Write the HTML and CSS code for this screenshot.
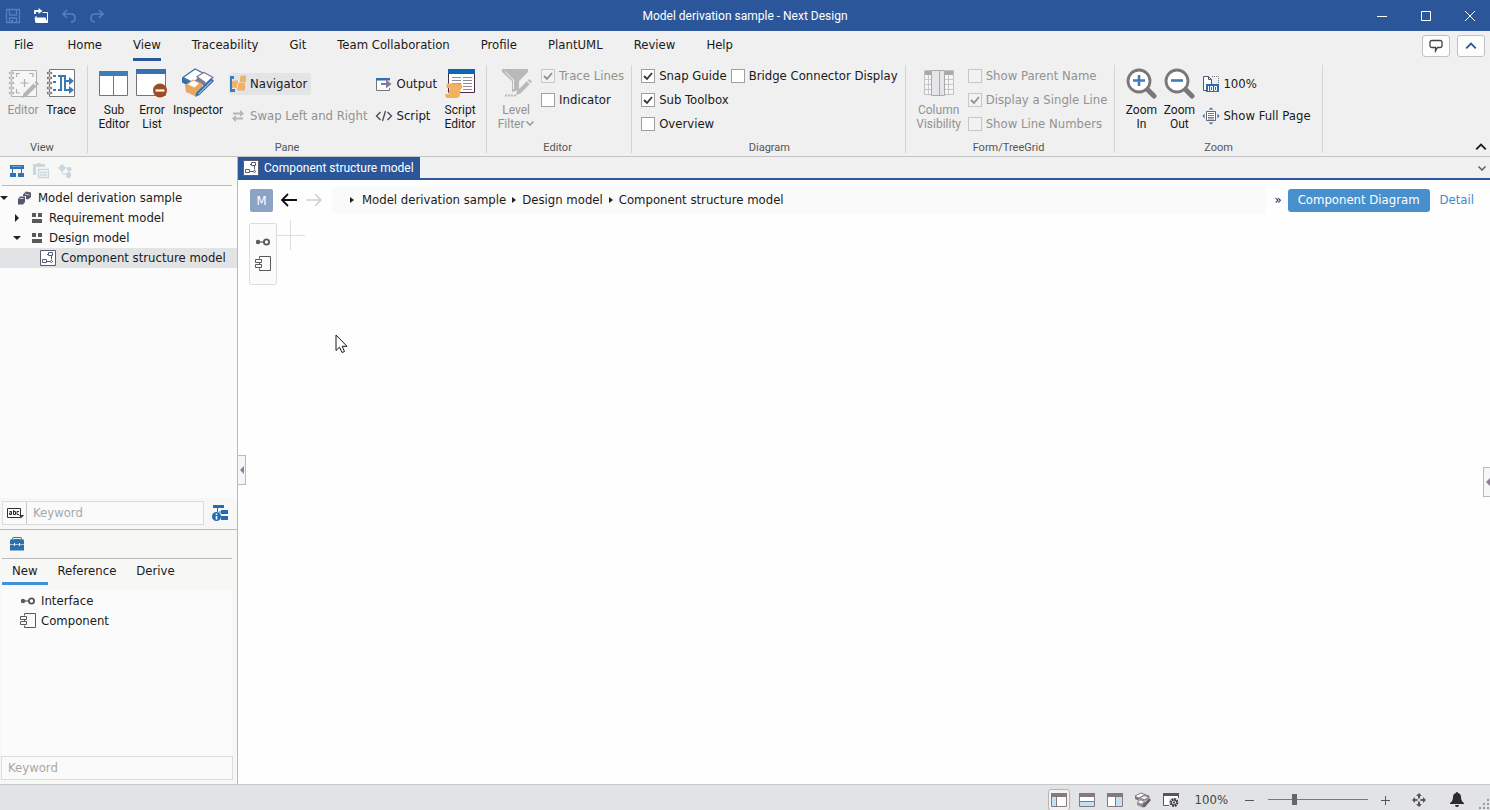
FILE: index.html
```html
<!DOCTYPE html>
<html lang="en">

<head>
  <meta charset="UTF-8">
  <meta name="viewport" content="width=device-width, initial-scale=1.0">
  <title>Model derivation sample - Next Design</title>
  <link rel="stylesheet" href="styles.css">
</head>

<body>
  <!-- shared icons -->
  <svg class="defs" width="0" height="0" aria-hidden="true">
    <symbol id="i-interface" viewBox="0 0 16 16">
      <circle cx="3" cy="8" r="2.2" fill="#595959"/>
      <path d="M4 8h5" stroke="#595959" stroke-width="1.2"/>
      <circle cx="11.5" cy="8" r="2.6" fill="none" stroke="#595959" stroke-width="1.8"/>
    </symbol>
    <symbol id="i-component" viewBox="0 0 16 16">
      <path d="M4.5 2.500V.5h11v14h-11v-2M4.500 7v1" fill="none" stroke="#595959"/>
      <path d="M.5 3.500h6v3h-6zM.5 8.500h6v3h-6z" fill="none" stroke="#595959"/>
    </symbol>
    <symbol id="i-structure" viewBox="0 0 16 16">
      <path d="M.5.5h15v15H.5z" fill="#fff" stroke="#5a5c72"/>
      <path d="M8.500 2.500h4v3h-4zM2.500 9.500h4v3h-4zM6.500 11.500h4M11.500 5.500v4M7 4.500h1.500" fill="none" stroke="#5a5c72"/>
      <circle cx="11.500" cy="11.500" r="1" fill="none" stroke="#5a5c72"/>
    </symbol>
    <symbol id="i-package" viewBox="0 0 12 12">
      <path d="M1 1h4v4H1zM7 1h4v4H7zM1 7h10v4H1z" fill="#595959"/>
    </symbol>
    <symbol id="i-chevron-down" viewBox="0 0 10 10">
      <path d="M1.500 3.500L5 7l3.500-3.500" fill="none" stroke="currentColor" stroke-width="1.400"/>
    </symbol>
    <symbol id="i-chevron-up" viewBox="0 0 10 10">
      <path d="M1 7l4-4 4 4" fill="none" stroke="currentColor" stroke-width="1.500"/>
    </symbol>
    <symbol id="i-pencil" viewBox="0 0 18 18">
      <path d="M1 17l1.500-4.500L12.500 2.500l3 3L5.500 15.500zM13.500 1.500l1-1q.8-.5 1.500.2l1.500 1.500q.6.700 0 1.300l-1 1z" fill="currentColor"/>
    </symbol>
  </svg>

  <header class="titlebar">
    <div class="quick">
      <button type="button" class="dim" aria-label="Save">
        <svg width="16" height="16" viewBox="0 0 16 16"><path d="M1.500 1.500h13v13h-13zM4.500 2v5h7V2M4.500 14v-4h7v4" fill="none" stroke="currentColor" stroke-width="1.300"/><path d="M6 12h2v2H6z" fill="currentColor"/></svg>
      </button>
      <button type="button" aria-label="Open">
        <svg width="16" height="16" viewBox="0 0 16 16"><path d="M3 8v6.500h11.500v-10H9.500" fill="none" stroke="currentColor"/><path d="M1.500 9.500h11l2 5H2.500z" fill="currentColor"/><path d="M2 6V3h4" fill="none" stroke="currentColor" stroke-width="1.800"/><path d="M5.500 0L9.500 3l-4 3z" fill="currentColor"/></svg>
      </button>
      <button type="button" class="dim" aria-label="Undo">
        <svg width="16" height="16" viewBox="0 0 16 16"><path d="M6 2L2 6l4 4M2.500 6H10q4 0 4 4t-4 4" fill="none" stroke="currentColor" stroke-width="1.600"/></svg>
      </button>
      <button type="button" class="dim" aria-label="Redo">
        <svg width="16" height="16" viewBox="0 0 16 16"><path d="M10 2l4 4-4 4M13.500 6H6q-4 0-4 4t4 4" fill="none" stroke="currentColor" stroke-width="1.600"/></svg>
      </button>
    </div>
    <h1 class="title">Model derivation sample - Next Design</h1>
    <div class="window-buttons">
      <button type="button" aria-label="Minimize"><svg width="12" height="12" viewBox="0 0 12 12"><path d="M1 6.500h10" stroke="#fff"/></svg></button>
      <button type="button" aria-label="Maximize"><svg width="12" height="12" viewBox="0 0 12 12"><path d="M1.500 1.500h9v9h-9z" fill="none" stroke="#fff"/></svg></button>
      <button type="button" aria-label="Close"><svg width="12" height="12" viewBox="0 0 12 12"><path d="M1 1l10 10M11 1L1 11" stroke="#fff"/></svg></button>
    </div>
  </header>

  <nav class="tabs">
    <a href="#" class="file">File</a>
    <a href="#">Home</a>
    <a href="#" class="active">View</a>
    <a href="#">Traceability</a>
    <a href="#">Git</a>
    <a href="#">Team Collaboration</a>
    <a href="#">Profile</a>
    <a href="#">PlantUML</a>
    <a href="#">Review</a>
    <a href="#">Help</a>
    <div class="tabs-right">
      <button type="button" aria-label="Feedback"><svg width="14" height="14" viewBox="0 0 14 14"><path d="M3 1.500h8q2 0 2 2v3q0 2-2 2H8.500L6.500 12V8.500H3q-2 0-2-2v-3q0-2 2-2z" fill="none" stroke="#444" stroke-width="1.300"/></svg></button>
      <button type="button" class="blue" aria-label="Collapse"><svg width="12" height="12"><use href="#i-chevron-up"/></svg></button>
    </div>
  </nav>

  <div class="ribbon">
    <section class="group">
      <div class="group-body">
        <button type="button" class="big" disabled>
          <svg width="32" height="32" viewBox="0 0 32 32" color="#b4b4b4"><path d="M4.500 3.500h25v26h-25z" fill="#f6f6f6" stroke="#b0b0b0"/><path d="M3 6h3M3 11h3M3 16h3M3 21h3M3 26h3" stroke="#b0b0b0" stroke-width="2.500" stroke-linecap="round"/><path d="M3.500 6h2M3.500 11h2M3.500 16h2M3.500 21h2M3.500 26h2" stroke="#f6f6f6"/><path d="M9.500 10V6.500H13M22 6.500h4V10M9.500 22v4H13M17.500 12v8M13.500 16h8" fill="none" stroke="#b0b0b0" stroke-width="1.200"/><use href="#i-pencil" x="14" y="14" width="18" height="18"/></svg>
          <span>Editor</span>
        </button>
        <button type="button" class="big">
          <svg width="32" height="32" viewBox="0 0 32 32"><path d="M4.500 2.500h25v27h-25z" fill="#fff" stroke="#77777b"/><path d="M3 6h3M3 11h3M3 16h3M3 21h3M3 26h3" stroke="#77777b" stroke-width="2.500" stroke-linecap="round"/><path d="M3.500 6h2M3.500 11h2M3.500 16h2M3.500 21h2M3.500 26h2" stroke="#fff"/><path d="M8 9h3M13 9h7v14h5M8 15h3M8 23h3M13 23h3V9M20 14h5" fill="none" stroke="#3a7ab8" stroke-width="2"/><path d="M24 10l5 4-5 4zM24 19l5 4-5 4z" fill="#3a7ab8"/></svg>
          <span>Trace</span>
        </button>
      </div>
      <h2>View</h2>
    </section>

    <section class="group roomy">
      <div class="group-body">
        <button type="button" class="big">
          <svg width="32" height="32" viewBox="0 0 32 32"><path d="M1.500 4.500h28v24h-28zM15.500 8v20" fill="#fff" stroke="#717478"/><path d="M1 4h29v5H1z" fill="#3f7cba"/></svg>
          <span>Sub<br>Editor</span>
        </button>
        <button type="button" class="big">
          <svg width="32" height="32" viewBox="0 0 32 32"><path d="M.5 3.500h29v25H.5z" fill="#fff" stroke="#717478"/><path d="M0 2h30v5H0z" fill="#3771b0"/><circle cx="24" cy="23.500" r="7" fill="#9e4a22"/><path d="M19.500 23.500h9" stroke="#fff" stroke-width="2.200"/></svg>
          <span>Error<br>List</span>
        </button>
        <button type="button" class="big inspector">
          <svg width="32" height="32" viewBox="0 0 32 32"><path d="M1 10.500L13 2l10 5-12 8.500z" fill="#fff" stroke="#2f6fae" stroke-width="1.200"/><path d="M0 10.500l10 5v4l-4-1-6-3z" fill="#2f6fae"/><path d="M15 9.500l7-4 9 5-6 6-3-1z" fill="#fff" stroke="#837a95" stroke-width="1.200"/><path d="M15 9.500l8 5v5l-8-5z" fill="#837a95"/><path d="M3 18l8-5.500 9 4v6.500l-7 6-9-4z" fill="#e9a65f"/><path d="M6 17.500l5.500-4 5.500 3-4.500 4z" fill="#fff"/><path d="M29 11l3 3-14.500 14-4.500 2 1.500-4.500z" fill="#2f6fae"/><path d="M16.500 27L29.500 14" stroke="#dce9f5"/></svg>
          <span>Inspector</span>
        </button>
        <div class="stack">
          <button type="button" class="small pressed">
            <svg width="18" height="18" viewBox="0 0 18 18"><path d="M1 1h4v3H3v10h3v3H1z" fill="#3f7cba"/><path d="M11 2l2-1.500h4V7h-6zM3 7l1.500-1.500H9V13H3zM9 9l1.500-1.500H16v8H8V9z" fill="#efb267"/><path d="M8.500 8.500v5M5 14v-2" stroke="#f7e2c5"/></svg>
            Navigator
          </button>
          <button type="button" class="small" disabled>
            <svg width="18" height="18" viewBox="0 0 18 18"><path d="M4 6.500h8M6 11.500h8" stroke="#b5b5b5" stroke-width="2"/><path d="M11 3l4 3.500-4 3.500zM7 8L3 11.500 7 15z" fill="#b5b5b5"/></svg>
            Swap Left and Right
          </button>
        </div>
        <div class="stack">
          <button type="button" class="small">
            <svg width="18" height="18" viewBox="0 0 18 18"><path d="M14.500 5V3.500H1.500v12h13V13" fill="#fff" stroke="#717478"/><path d="M1 3h14v2.500H1z" fill="#2f6fae"/><path d="M6 9h6" stroke="#85799d" stroke-width="2"/><path d="M11 4.500L16.500 9 11 13.500z" fill="#85799d"/></svg>
            Output
          </button>
          <button type="button" class="small">
            <svg width="18" height="18" viewBox="0 0 18 18"><path d="M5.500 5L1.500 9l4 4M12.500 5l4 4-4 4M10.500 4l-3 10" fill="none" stroke="#4a4450" stroke-width="1.300"/></svg>
            Script
          </button>
        </div>
        <button type="button" class="big">
          <svg width="32" height="32" viewBox="0 0 32 32"><path d="M4.500 3.500h26v22h-26z" fill="#fff" stroke="#4b2a45"/><path d="M4 2h27v5H4z" fill="#1164b4"/><path d="M8 10.500h9M8 13.500h9M8 16.500h9M8 19.500h9M19 10.500h9M19 13.500h9M19 16.500h9M19 19.500h9M19 22.500h9" stroke="#8d8d92"/><path d="M3 16.500q-1.500 3 0 4.500h3q-2 4-.500 6H1q0 4 3 4h8q4 0 4-4 0-3 1-5 2-1 1-4-1-1.500-3-1.500z" fill="#f2b25f"/></svg>
          <span>Script<br>Editor</span>
        </button>
      </div>
      <h2>Pane</h2>
    </section>

    <section class="group">
      <div class="group-body">
        <button type="button" class="big filter" disabled>
          <svg width="32" height="32" viewBox="0 0 32 32" color="#b9b9b9"><path d="M2 2h26v3l-9 9v9l-7 2V14L2 5z" fill="#b9b9bb"/><path d="M5 28.500h12" stroke="#b9b9b9" stroke-width="2" stroke-dasharray="2 1"/><path d="M13.500 22V13L5 4.500" fill="none" stroke="#f6f6f6"/><use href="#i-pencil" x="15" y="12" width="17" height="17"/></svg>
          <span>Level<br>Filter<svg width="10" height="10"><use href="#i-chevron-down"/></svg></span>
        </button>
        <div class="checks">
          <label class="off"><input type="checkbox" checked disabled>Trace Lines</label>
          <label><input type="checkbox">Indicator</label>
        </div>
      </div>
      <h2>Editor</h2>
    </section>

    <section class="group diagram">
      <div class="group-body">
        <div class="checks">
          <div class="check-row">
            <label><input type="checkbox" checked>Snap Guide</label>
            <label><input type="checkbox">Bridge Connector Display</label>
          </div>
          <label><input type="checkbox" checked>Sub Toolbox</label>
          <label><input type="checkbox">Overview</label>
        </div>
      </div>
      <h2>Diagram</h2>
    </section>

    <section class="group">
      <div class="group-body">
        <button type="button" class="big columns" disabled>
          <svg width="32" height="32" viewBox="0 0 32 32"><path d="M1.500 3.500h29v24h-29z" fill="#f5f5f5" stroke="#c2c2c2"/><path d="M2 8v-4h28v4z" fill="#a9a9ab"/><path d="M2 12.500h28M2 17.500h28M2 22.500h28M5.500 8v19M25.500 8v19" stroke="#c6c6c6"/><path d="M8.500 3.500h8v25h-8zM16.500 3.500h5v25h-5z" fill="#e6e6e8" stroke="#a9a9ab"/></svg>
          <span>Column<br>Visibility</span>
        </button>
        <div class="checks">
          <label class="off"><input type="checkbox" disabled>Show Parent Name</label>
          <label class="off"><input type="checkbox" checked disabled>Display a Single Line</label>
          <label class="off"><input type="checkbox" disabled>Show Line Numbers</label>
        </div>
      </div>
      <h2>Form/TreeGrid</h2>
    </section>

    <section class="group roomy">
      <div class="group-body">
        <button type="button" class="big">
          <svg width="32" height="32" viewBox="0 0 32 32"><path d="M22 22l7 7" stroke="#7b7779" stroke-width="5" stroke-linecap="round"/><circle cx="14" cy="14" r="11" fill="#fff" stroke="#7b7779" stroke-width="2.800"/><path d="M8 13.500h12M14 8v11" stroke="#3f7cba" stroke-width="2.600"/></svg>
          <span>Zoom<br>In</span>
        </button>
        <button type="button" class="big">
          <svg width="32" height="32" viewBox="0 0 32 32"><path d="M22 22l7 7" stroke="#7b7779" stroke-width="5" stroke-linecap="round"/><circle cx="14" cy="14" r="11" fill="#fff" stroke="#7b7779" stroke-width="2.800"/><path d="M8 13.500h12" stroke="#3f7cba" stroke-width="2.600"/></svg>
          <span>Zoom<br>Out</span>
        </button>
        <div class="stack">
          <button type="button" class="small">
            <svg width="18" height="18" viewBox="0 0 18 18"><path d="M4 15.500H1.500V1.500h5l3 3V9M6.500 1.500v3h3" fill="#fff" stroke="#55556e"/><path d="M10 1.500h6.500V9" fill="none" stroke="#77777b" stroke-dasharray="1 1"/><path d="M4 9h13v8H4z" fill="#2f6fae"/><path d="M6.500 11v5M8.500 11.500h2v4h-2zM12.500 11.500h2v4h-2z" fill="none" stroke="#fff"/></svg>
            100%
          </button>
          <button type="button" class="small">
            <svg width="18" height="18" viewBox="0 0 18 18"><path d="M4.500 4.500h9v9h-9z" fill="#fff" stroke="#66666c"/><path d="M6 6.500h6M6 8.500h6M6 10.500h6M6 12h6" stroke="#77779a"/><path d="M6.500 2.500L9 .5l2.500 2zM6.500 15.500l2.500 2 2.500-2zM2.500 6.500L.5 9l2 2.500zM15.500 6.500l2 2.500-2 2.500z" fill="#2f6fae"/></svg>
            Show Full Page
          </button>
        </div>
      </div>
      <h2>Zoom</h2>
    </section>
    <button type="button" class="ribbon-collapse" aria-label="Collapse ribbon"><svg width="12" height="12"><use href="#i-chevron-up"/></svg></button>
  </div>

  <main class="workspace">
    <aside class="sidebar">
      <section class="navigator">
        <div class="toolbar">
          <svg width="16" height="16" viewBox="0 0 16 16"><path d="M1 2h14v4H1zM1 10h6v4H1zM9 10h6v4H9z" fill="#2f74b5"/><path d="M3.500 6v4M12.500 6v4" stroke="#2f74b5"/><path d="M3 3.500h10" stroke="#6fa3d2"/></svg>
          <svg width="16" height="16" viewBox="0 0 16 16"><path d="M0 1h4V0h4v1h4v3H0zM0 4h3v8H0z" fill="#cbd6de"/><path d="M5.500 6.500h10v8h-10zM7 9.500h7M7 12h7" fill="none" stroke="#cbd6de" stroke-width="1.500"/></svg>
          <svg width="16" height="16" viewBox="0 0 16 16"><path d="M5 1l4 4-4 4-4-4z" fill="#cbd6de"/><path d="M5 8v3h5M8 5h4v6" fill="none" stroke="#cbd6de"/><path d="M10 5l2-1.500L14.500 5v2L12 8.500 10 7zM9 11l2-2 3 1v4l-2 1.500-3-1.500z" fill="#cbd6de"/></svg>
        </div>
        <ul class="tree">
          <li class="lv0"><svg class="arrow" width="8" height="8" viewBox="0 0 8 8"><path d="M0 2h8L4 6z" fill="#222"/></svg><svg width="16" height="16" viewBox="0 0 16 16"><path d="M1 9l2-2.500h5V12l-2 2.500H1zM6 4.500l3-3 5 1v4.500l-3 2.500-2-.5V6H6z" fill="#55566a"/><path d="M2.500 8.500h4M8 4l4.500 1" stroke="#c4c4ce"/></svg>Model derivation sample</li>
          <li class="lv1"><svg class="arrow" width="8" height="8" viewBox="0 0 8 8"><path d="M2 0v8l4-4z" fill="#222"/></svg><svg width="14" height="12" viewBox="0 0 12 12"><use href="#i-package"/></svg>Requirement model</li>
          <li class="lv1"><svg class="arrow" width="8" height="8" viewBox="0 0 8 8"><path d="M0 2h8L4 6z" fill="#222"/></svg><svg width="14" height="12" viewBox="0 0 12 12"><use href="#i-package"/></svg>Design model</li>
          <li class="lv2 selected"><svg width="16" height="16"><use href="#i-structure"/></svg>Component structure model</li>
        </ul>
        <div class="search-row">
          <div class="search">
            <button type="button" aria-label="Match case"><svg width="18" height="14" viewBox="0 0 18 14"><path d="M1.500 2.500h13v9h-13z" fill="#fff" stroke="#3a2a3a"/><path d="M3.500 5.500h2v3h-2v-1.500h2M7.500 4v4.500h2v-3h-2M13 5.500h-2v3h2" fill="none" stroke="#3a2a3a"/><path d="M13 9h5l-2.500 3z" fill="#3a2a3a"/></svg></button>
            <input type="text" placeholder="Keyword" aria-label="Search models">
          </div>
          <svg width="18" height="18" viewBox="0 0 18 18"><path d="M2 1h11v3H2zM10 6h7v4h-7zM10 12h7v4h-7z" fill="#1f6db8"/><path d="M6.500 4v4M8 8h2" stroke="#1f6db8"/><circle cx="5.500" cy="12.500" r="4.500" fill="#1f6db8"/><path d="M5.500 9.500v1.500M5.500 12v3.500" stroke="#fff" stroke-width="1.600"/></svg>
        </div>
      </section>
      <section class="toolbox">
        <div class="toolbar">
          <svg width="16" height="16" viewBox="0 0 16 16"><path d="M1 5q0-2 2-2 0-2 2-2h6q2 0 2 2 2 0 2 2v3H1zM1 9h14v5.500H1z" fill="#2f6fae"/><path d="M4 3.500q0-1 1-1h6q1 0 1 1" fill="none" stroke="#f7f7f5"/><path d="M1 8.500h14" stroke="#a9c5e0"/><path d="M5.500 7v3M10.500 7v3" stroke="#f7f7f5"/></svg>
        </div>
        <nav class="box-tabs">
          <a href="#" class="active">New</a>
          <a href="#">Reference</a>
          <a href="#">Derive</a>
        </nav>
        <ul class="box-list">
          <li><svg width="16" height="16"><use href="#i-interface"/></svg>Interface</li>
          <li><svg width="16" height="16"><use href="#i-component"/></svg>Component</li>
        </ul>
        <div class="search">
          <input type="text" placeholder="Keyword" aria-label="Search toolbox">
        </div>
      </section>
    </aside>

    <section class="editor">
      <div class="doc-tabs">
        <a href="#" class="doc-tab"><svg width="16" height="16"><use href="#i-structure"/></svg>Component structure model</a>
        <button type="button" aria-label="Open documents"><svg width="10" height="10"><use href="#i-chevron-down"/></svg></button>
      </div>
      <div class="path-bar">
        <span class="badge">M</span>
        <button type="button" class="arrow-btn" aria-label="Back"><svg width="18" height="16" viewBox="0 0 18 16"><path d="M17 8H2M8 2L2 8l6 6" fill="none" stroke="#111" stroke-width="1.800"/></svg></button>
        <button type="button" class="arrow-btn" aria-label="Forward" disabled><svg width="18" height="16" viewBox="0 0 18 16"><path d="M1 8h15M10 2l6 6-6 6" fill="none" stroke="#cfcfcf" stroke-width="1.500"/></svg></button>
        <nav class="crumbs">
          <a href="#">Model derivation sample</a>
          <a href="#">Design model</a>
          <a href="#">Component structure model</a>
        </nav>
        <span class="more">»</span>
        <button type="button" class="view-btn">Component Diagram</button>
        <a href="#" class="detail">Detail</a>
      </div>
      <div class="canvas">
        <div class="sub-toolbox">
          <button type="button" aria-label="Interface"><svg width="16" height="16"><use href="#i-interface"/></svg></button>
          <button type="button" aria-label="Component"><svg width="16" height="16"><use href="#i-component"/></svg></button>
        </div>
        <svg class="origin" width="28" height="30" viewBox="0 0 28 30"><path d="M0 15.500h28M13.500 0v30" stroke="#dedede"/></svg>
        <svg class="cursor" width="13" height="20" viewBox="0 0 13 20"><path d="M1 1v15.500l3.500-3.300L7 18.500l2.500-1-2.300-5.200H12z" fill="#fff" stroke="#1c1420"/></svg>
        <button type="button" class="handle left" aria-label="Collapse navigator"><svg width="4" height="8" viewBox="0 0 4 8"><path d="M4 0v8L0 4z" fill="#8d7c92"/></svg></button>
        <button type="button" class="handle right" aria-label="Expand inspector"><svg width="4" height="8" viewBox="0 0 4 8"><path d="M4 0v8L0 4z" fill="#8d7c92"/></svg></button>
      </div>
    </section>
  </main>

  <footer class="statusbar">
    <button type="button" class="pressed" aria-label="Navigator"><svg width="16" height="14" viewBox="0 0 16 14"><path d="M.5.5h15v13H.5z" fill="#fff" stroke="#85797f"/><path d="M1 4h4v9H1z" fill="#bfe3f5"/><path d="M5.500 4v9" stroke="#85797f"/><path d="M0 0h16v4H0z" fill="#85797f"/></svg></button>
    <button type="button" aria-label="Bottom pane"><svg width="16" height="14" viewBox="0 0 16 14"><path d="M.5.5h15v13H.5z" fill="#fff" stroke="#85797f"/><path d="M1 9h14v4H1z" fill="#bfe3f5"/><path d="M1 8.500h14" stroke="#85797f"/><path d="M0 0h16v4H0z" fill="#85797f"/></svg></button>
    <button type="button" aria-label="Sub editor"><svg width="16" height="14" viewBox="0 0 16 14"><path d="M.5.5h15v13H.5z" fill="#fff" stroke="#85797f"/><path d="M9 4h6v9H9z" fill="#bfe3f5"/><path d="M8.500 4v9" stroke="#85797f"/><path d="M0 0h16v4H0z" fill="#85797f"/></svg></button>
    <button type="button" aria-label="Inspector"><svg width="17" height="16" viewBox="0 0 17 16"><path d="M1 4l6-3 8 3-6 5z" fill="#fff" stroke="#85797f"/><path d="M1 4l4 2v3L1 7z" fill="#85797f"/><path d="M5 6l5-2.500 5 1.500-4 3z" fill="#f4f4f4" stroke="#85797f" stroke-width="1.200"/><path d="M3 10l4-2.500 4 2v3L7 15l-4-2z" fill="#9a9095"/><path d="M4 10l3-1.500L10 10l-3 1.500z" fill="#fff"/><path d="M15 6l2 2-6 7-3 .5.500-2.500z" fill="#6a6066"/></svg></button>
    <button type="button" aria-label="Settings"><svg width="16" height="14" viewBox="0 0 16 14"><path d="M.5.5h15v13H.5z" fill="#fff"/><path d="M6 12.500H.5V1M15.500 3v2" fill="none" stroke="#5b5357"/><path d="M0 0h16v3H0z" fill="#5b5357"/><path d="M6 5h10v9H6z" fill="#e3e4e6"/><circle cx="11" cy="9.500" r="3.500" fill="none" stroke="#3c3438" stroke-width="1.800" stroke-dasharray="1.800 .9"/><circle cx="11" cy="9.500" r="2.500" fill="none" stroke="#3c3438"/><circle cx="11" cy="9.500" r="1" fill="#3c3438"/></svg></button>
    <span class="zoom-value">100%</span>
    <button type="button" aria-label="Zoom out"><svg width="10" height="10" viewBox="0 0 10 10"><path d="M0 5.500h9" stroke="#55565a"/></svg></button>
    <input type="range" min="0" max="100" value="25" aria-label="Zoom">
    <button type="button" aria-label="Zoom in"><svg width="10" height="10" viewBox="0 0 10 10"><path d="M0 5.500h9M4.500 1v9" stroke="#55565a"/></svg></button>
    <button type="button" class="fit" aria-label="Fit"><svg width="14" height="14" viewBox="0 0 14 14"><path d="M7 0l3 3H4zM7 14l3-3H4zM0 7l3-3v6zM14 7l-3-3v6zM6 3h2v3H6zM6 8h2v3H6zM3 6h3v2H3zM8 6h3v2H8z" fill="#58555c"/><path d="M5.500 5.500h3v3h-3z" fill="#e3e4e6"/></svg></button>
    <button type="button" class="bell" aria-label="Notifications"><svg width="14" height="15" viewBox="0 0 14 15"><path d="M7 0q1 0 1 1 3 .8 3 4 0 4 3 6v1H0v-1q3-2 3-6 0-3.200 3-4 0-1 1-1zM5 13h4q0 2-2 2t-2-2z" fill="#2f2830"/></svg></button>
    <svg class="grip" width="11" height="11" viewBox="0 0 11 11"><path d="M8 0h2v2H8zM4 4h2v2H4zM8 4h2v2H8zM0 8h2v2H0zM4 8h2v2H4zM8 8h2v2H8z" fill="#9c9bb0"/></svg>
  </footer>
</body>

</html>
```
FILE: styles.css
```css
* {
  box-sizing: border-box;
}

body {
  margin: 0;
  height: 100vh;
  display: flex;
  flex-direction: column;
  overflow: hidden;
  background: #f0f0f0;
  color: #1a1a1a;
  font-family: "DejaVu Sans Condensed", "Open Sans", sans-serif;
  font-size: 13px;
  line-height: 20px;
}

button {
  padding: 0;
  border: none;
  background: none;
  color: inherit;
  font: inherit;
  display: flex;
  align-items: center;
  justify-content: center;
}

a {
  color: inherit;
  text-decoration: none;
}

svg {
  flex: none;
}

ul {
  list-style: none;
  margin: 0;
  padding: 0;
}

.defs {
  position: absolute;
}

/* title bar */
.titlebar {
  display: grid;
  grid-template-columns: 1fr auto 1fr;
  align-items: center;
  height: 31px;
  flex: none;
  background: #2b579a;
  color: #fff;
}

.quick {
  display: flex;
  gap: 12px;
  padding-left: 5px;
}

.quick .dim {
  color: #5680bd;
}

.title {
  margin: 0;
  font-family: Roboto, sans-serif;
  font-size: 12px;
  font-weight: normal;
}

.window-buttons {
  display: flex;
  justify-content: flex-end;
  gap: 4px;
}

.window-buttons button {
  width: 40px;
  height: 31px;
}

/* ribbon tabs */
.tabs {
  display: flex;
  align-items: flex-start;
  gap: 31px;
  height: 31px;
  flex: none;
  padding: 0 5px 0 14px;
}

.tabs a {
  padding: 4px 0 3px;
  border-bottom: 3px solid transparent;
}

.tabs .file {
  margin-right: 3px;
}

.tabs a.active {
  border-color: #2b579a;
}

.tabs-right {
  display: flex;
  gap: 7px;
  margin: 4px 0 0 auto;
}

.tabs-right button {
  width: 28px;
  height: 22px;
  border: 1px solid #c2c2c2;
  border-radius: 3px;
  background: #fdfdfd;
}

.tabs-right .blue {
  color: #2b579a;
}

/* ribbon */
.ribbon {
  display: flex;
  flex: none;
  height: 95px;
  padding: 3px 0;
  border-bottom: 1px solid #c3c3c3;
}

.group {
  display: flex;
  flex-direction: column;
  justify-content: space-between;
  padding: 0 7px 0 4px;
  border-right: 1px solid #d4d4d4;
}

.group.roomy {
  padding-left: 7px;
}

.group.diagram {
  padding-left: 9px;
}

.group h2 {
  margin: 0;
  font-family: Roboto, sans-serif;
  font-size: 11px;
  line-height: 10px;
  font-weight: normal;
  text-align: center;
  color: #555;
}

.group-body {
  display: flex;
  align-items: flex-start;
}

.big {
  flex-direction: column;
  min-width: 38px;
  padding-top: 2px;
  font-family: Roboto, sans-serif;
  font-size: 12px;
  line-height: 14px;
}

.big span {
  padding-top: 4px;
}

.big.inspector {
  min-width: 54px;
}

.big.filter {
  min-width: 50px;
}

.big.columns {
  min-width: 58px;
}

.big:disabled,
.small:disabled,
.off {
  color: #929292;
}

.stack {
  display: flex;
  flex-direction: column;
  align-items: flex-start;
  gap: 10px;
  padding: 8px 0 0 4px;
}

.small {
  height: 22px;
  gap: 3px;
  padding-right: 4px;
}

.small.pressed {
  background: #e2e4e6;
  border-radius: 3px;
}

.checks {
  display: flex;
  flex-direction: column;
  gap: 4px;
  padding-top: 1px;
}

.check-row {
  display: flex;
  gap: 4px;
}

.checks label {
  display: flex;
  align-items: center;
  gap: 4px;
}

input[type="checkbox"] {
  appearance: none;
  width: 14px;
  height: 14px;
  margin: 0;
  border: 1px solid #a0a0a0;
  background: #fff;
}

input[type="checkbox"]:checked {
  background: #fff url("data:image/svg+xml,%3Csvg xmlns='http://www.w3.org/2000/svg' viewBox='0 0 12 12'%3E%3Cpath d='M2 6l3 3 5-6' fill='none' stroke='%23402c40' stroke-width='1.800'/%3E%3C/svg%3E");
}

input[type="checkbox"]:disabled {
  opacity: .5;
  background-color: #f4f4f4;
}

.ribbon-collapse {
  align-self: flex-end;
  margin: 0 3px 0 auto;
}

/* workspace */
.workspace {
  display: flex;
  flex: 1;
  min-height: 0;
}

.sidebar {
  display: flex;
  flex-direction: column;
  width: 238px;
  flex: none;
  border-right: 1px solid #bababa;
  background: #f7f7f5;
}

.navigator {
  display: flex;
  flex-direction: column;
  flex: 1;
  min-height: 0;
}

.toolbar {
  display: flex;
  align-items: center;
  gap: 8px;
  height: 29px;
  flex: none;
  margin: 0 5px 0 2px;
  padding: 0 7px;
  border-bottom: 1px solid #bcbcbc;
}

.tree {
  flex: 1;
  padding-top: 2px;
  background: #fbfbfb;
}

.tree li,
.box-list li {
  display: flex;
  align-items: center;
  gap: 5px;
  height: 20px;
}

.tree .arrow {
  margin-right: 4px;
}

.tree .lv1 {
  padding-left: 13px;
}

.tree .lv2 {
  padding-left: 40px;
}

.tree .selected {
  background: #e2e3e5;
}

.search-row {
  display: flex;
  align-items: center;
  gap: 7px;
  padding: 3px 8px 4px 2px;
}

.search {
  display: flex;
  flex: 1;
  min-width: 0;
  height: 24px;
  border: 1px solid #dcdcdc;
  background: #fafafa;
}

.search button {
  width: 24px;
  flex: none;
  border-right: 1px solid #c8c8c8;
}

.search input {
  flex: 1;
  min-width: 0;
  padding: 0 6px;
  border: none;
  background: none;
  font: inherit;
}

.search input::placeholder {
  color: #a8a8a8;
}

.toolbox {
  display: flex;
  flex-direction: column;
  height: 255px;
  border-top: 1px solid #bababa;
}

.box-tabs {
  display: flex;
  flex: none;
  padding-left: 2px;
}

.box-tabs a {
  padding: 2px 10px 1px;
  border-bottom: 3px solid transparent;
}

.box-tabs a.active {
  border-color: #3e93d6;
}

.box-list {
  flex: 1;
  margin: 4px 5px 0 1px;
  padding: 2px 0 0 19px;
  background: #fbfbfb;
}

.toolbox .search {
  flex: none;
  margin: 0 4px 4px 1px;
}

/* editor */
.editor {
  display: flex;
  flex-direction: column;
  flex: 1;
  min-width: 0;
  background: #fefefe;
}

.doc-tabs {
  display: flex;
  justify-content: space-between;
  height: 23px;
  flex: none;
  border-bottom: 2px solid #2b579a;
  background: #f0f0f0;
}

.doc-tab {
  display: flex;
  align-items: center;
  gap: 5px;
  padding: 0 6px 0 5px;
  background: #2b579a;
  color: #fff;
  font-family: Roboto, sans-serif;
  font-size: 12px;
}

.doc-tabs button {
  width: 16px;
  color: #55556e;
}

.path-bar {
  display: flex;
  align-items: center;
  height: 40px;
  flex: none;
  padding: 0 16px 0 12px;
}

.badge {
  width: 23px;
  line-height: 23px;
  border-radius: 2px;
  background: #8da3c6;
  color: #fff;
  text-align: center;
}

.arrow-btn {
  margin-left: 7px;
}

.crumbs {
  display: flex;
  flex: 1;
  margin-left: 9px;
  padding: 4px 18px;
  border-radius: 4px;
  background: #fafafa;
}

.crumbs a::before {
  content: "";
  display: inline-block;
  margin: 0 8px 1px 0;
  border: 3px solid transparent;
  border-left: 4px solid #222;
  border-right: none;
}

.crumbs a + a::before {
  margin-left: 6px;
  margin-right: 6px;
}

.more {
  margin: 0 6px 0 9px;
}

.view-btn {
  height: 23px;
  padding: 0 10px;
  border-radius: 3px;
  background: #488fcd;
  color: #fff;
}

.detail {
  margin-left: 10px;
  color: #3f8ccb;
}

.canvas {
  position: relative;
  flex: 1;
}

.sub-toolbox {
  position: absolute;
  left: 11px;
  top: 3px;
  display: flex;
  flex-direction: column;
  gap: 6px;
  padding: 10px 5px 12px;
  border: 1px solid #dcdcdc;
  border-radius: 2px;
  background: #fbfbfb;
}

.origin {
  position: absolute;
  left: 39px;
  top: 0;
}

.cursor {
  position: absolute;
  left: 97px;
  top: 114px;
}

.handle {
  position: absolute;
  width: 9px;
  height: 30px;
  border: 1px solid #bababa;
  background: #f5f6f8;
}

.handle.left {
  left: -1px;
  top: 235px;
}

.handle.right {
  right: -2px;
  top: 247px;
}

/* status bar */
.statusbar {
  display: flex;
  align-items: center;
  justify-content: flex-end;
  height: 26px;
  flex: none;
  padding-top: 4px;
  border-top: 1px solid #c8c8c8;
  background: #e2e3e5;
}

.statusbar button {
  width: 28px;
  height: 22px;
}

.statusbar .pressed {
  width: 22px;
  margin-right: 3px;
  border: 1px solid #b5b5b5;
  border-radius: 3px;
  background: #f2f2f2;
}

.zoom-value {
  margin: 0 8px 0 10px;
  color: #444;
}

.statusbar input[type="range"] {
  appearance: none;
  width: 100px;
  height: 12px;
  margin: 0 4px;
  background: linear-gradient(#77787c, #77787c) center / 100% 1px no-repeat;
}

.statusbar input[type="range"]::-webkit-slider-thumb {
  appearance: none;
  width: 5px;
  height: 11px;
  background: #66666a;
}

.statusbar .fit {
  margin-left: 5px;
}

.statusbar .bell {
  margin-left: 10px;
}

.grip {
  align-self: flex-end;
  margin-left: 8px;
}
```
